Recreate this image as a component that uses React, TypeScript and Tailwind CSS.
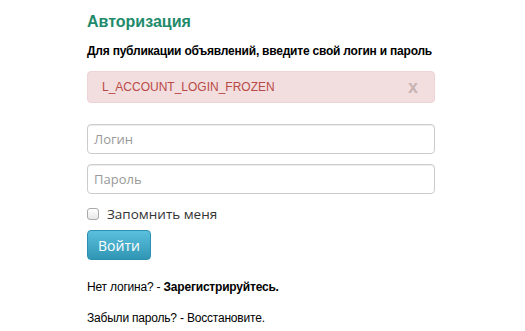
export default function App() {
  return (
    <div className="w-[525px] h-[331px] bg-white pl-[87px] pr-[90px] pt-[12px] font-['Liberation_Sans',Arial,sans-serif] text-[#333]">
      <h1 className="text-[16px] leading-[20px] font-bold text-[#218a6b]">Авторизация</h1>
      <p className="mt-[11px] whitespace-nowrap text-[12px] leading-[16px] font-bold tracking-[-0.22px] text-black">
        Для публикации объявлений, введите свой логин и пароль
      </p>

      <div className="mt-[12px] h-[32px] flex items-center justify-between rounded-[4px] border border-[#eed3d7] bg-[#f2dede] pl-[14px] pr-[16px]">
        <span className="text-[12px] text-[#b94a48]">L_ACCOUNT_LOGIN_FROZEN</span>
        <span className="text-[18px] font-bold leading-none text-[#c8b4b4]">x</span>
      </div>

      <form className="mt-[21px] flex flex-col font-['Open_Sans',sans-serif]">
        <input
          type="text"
          placeholder="Логин"
          className="h-[30px] w-full rounded-[4px] border border-[#ccc] px-[6px] text-[13px] placeholder:text-[#999] shadow-[inset_0_1px_1px_rgba(0,0,0,0.075)] outline-none"
        />
        <input
          type="password"
          placeholder="Пароль"
          className="mt-[10px] h-[30px] w-full rounded-[4px] border border-[#ccc] px-[6px] text-[13px] placeholder:text-[#999] shadow-[inset_0_1px_1px_rgba(0,0,0,0.075)] outline-none"
        />
        <label className="mt-[12px] flex items-center gap-[8px] text-[13.5px] leading-[16px] text-[#333]">
          <span className="w-[12px] h-[12px] rounded-[3px] border border-[#aaa] bg-gradient-to-b from-white to-[#e6e6e6]" />
          Запомнить меня
        </label>
        <button
          type="button"
          className="mt-[8px] w-[64px] h-[30px] rounded-[4px] border border-[#2a8fb0] bg-gradient-to-b from-[#5bc0de] to-[#2f96b4] text-white text-[14px]"
        >
          Войти
        </button>
      </form>

      <div className="text-[12px] leading-[16px] tracking-[-0.2px] text-black">
        <p className="mt-[19px]">
          Нет логина? - <b>Зарегистрируйтесь.</b>
        </p>
        <p className="mt-[15px]">Забыли пароль? - Восстановите.</p>
      </div>
    </div>
  );
}
